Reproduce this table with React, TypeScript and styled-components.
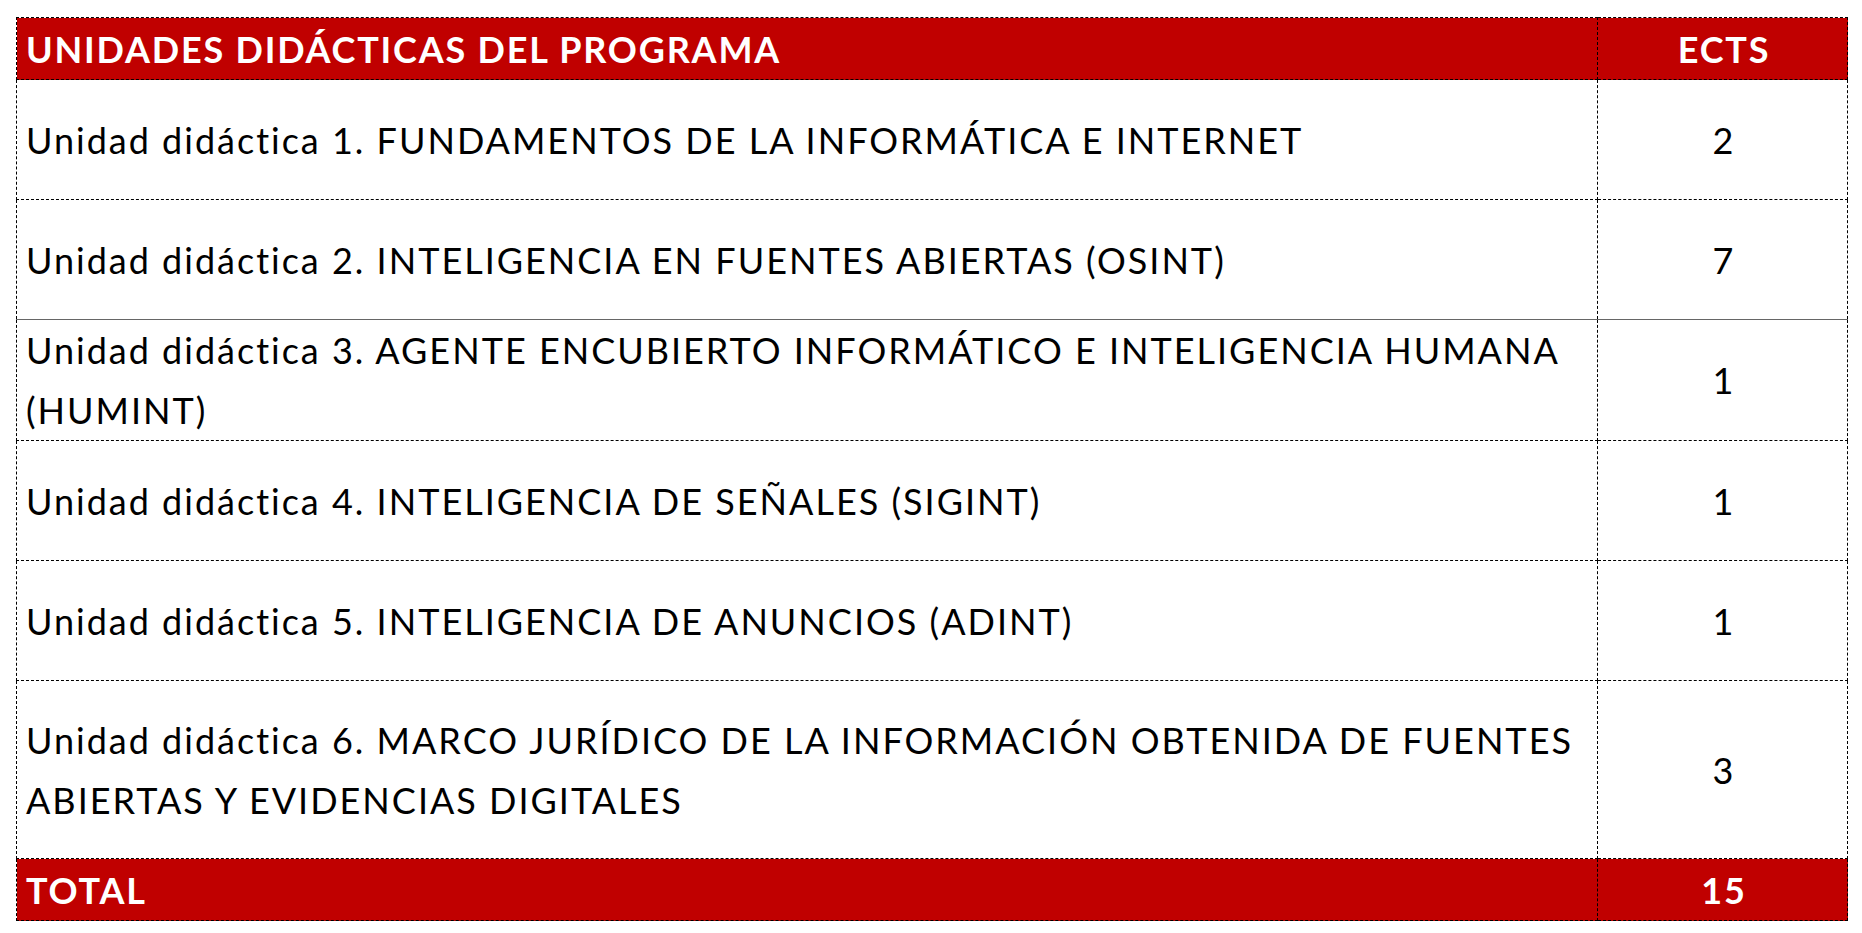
import styled, { createGlobalStyle } from "styled-components";

const Global = createGlobalStyle`
  body {
    margin: 0;
    background: #fff;
    font-family: Lato, "Liberation Sans", sans-serif;
  }
`;

const Page = styled.div`
  padding: 17px 0 0 16px;
`;

const Table = styled.table`
  border-collapse: collapse;
  width: 1831px;
  table-layout: fixed;
`;

const Cell = styled.td<{ $center?: boolean; $solidBottom?: boolean }>`
  border: 1px dashed #000;
  ${(p) => (p.$solidBottom ? "border-bottom: 1px solid #666;" : "")}
  padding: 0 6px 0 9px;
  font-size: 36px;
  letter-spacing: 2px;
  line-height: 60px;
  color: #000;
  text-align: ${(p) => (p.$center ? "center" : "left")};
  vertical-align: middle;
`;

const HeadCell = styled(Cell)`
  background: #c00000;
  color: #fff;
  font-weight: 700;
  letter-spacing: 1.8px;
  height: 61px;
  line-height: 40px;
`;

const Row = styled.tr<{ $h: number }>`
  height: ${(p) => p.$h}px;
`;

const units = [
  { text: "Unidad didáctica 1. FUNDAMENTOS DE LA INFORMÁTICA E INTERNET", ects: 2, h: 120 },
  { text: "Unidad didáctica 2. INTELIGENCIA EN FUENTES ABIERTAS (OSINT)", ects: 7, h: 120, solid: true },
  { text: "Unidad didáctica 3. AGENTE ENCUBIERTO INFORMÁTICO E INTELIGENCIA HUMANA (HUMINT)", ects: 1, h: 120 },
  { text: "Unidad didáctica 4. INTELIGENCIA DE SEÑALES (SIGINT)", ects: 1, h: 120 },
  { text: "Unidad didáctica 5. INTELIGENCIA DE ANUNCIOS (ADINT)", ects: 1, h: 120 },
  { text: "Unidad didáctica 6. MARCO JURÍDICO DE LA INFORMACIÓN OBTENIDA DE FUENTES ABIERTAS Y EVIDENCIAS DIGITALES", ects: 3, h: 178 },
];

export default function App() {
  return (
    <Page>
      <Global />
      <Table>
        <colgroup>
          <col style={{ width: 1581 }} />
          <col style={{ width: 250 }} />
        </colgroup>
        <thead>
          <Row $h={62}>
            <HeadCell as="th">UNIDADES DIDÁCTICAS DEL PROGRAMA</HeadCell>
            <HeadCell as="th" $center>ECTS</HeadCell>
          </Row>
        </thead>
        <tbody>
          {units.map((u) => (
            <Row key={u.text} $h={u.h}>
              <Cell $solidBottom={u.solid}>{u.text}</Cell>
              <Cell $center $solidBottom={u.solid}>{u.ects}</Cell>
            </Row>
          ))}
          <Row $h={61}>
            <HeadCell>TOTAL</HeadCell>
            <HeadCell $center>15</HeadCell>
          </Row>
        </tbody>
      </Table>
    </Page>
  );
}
